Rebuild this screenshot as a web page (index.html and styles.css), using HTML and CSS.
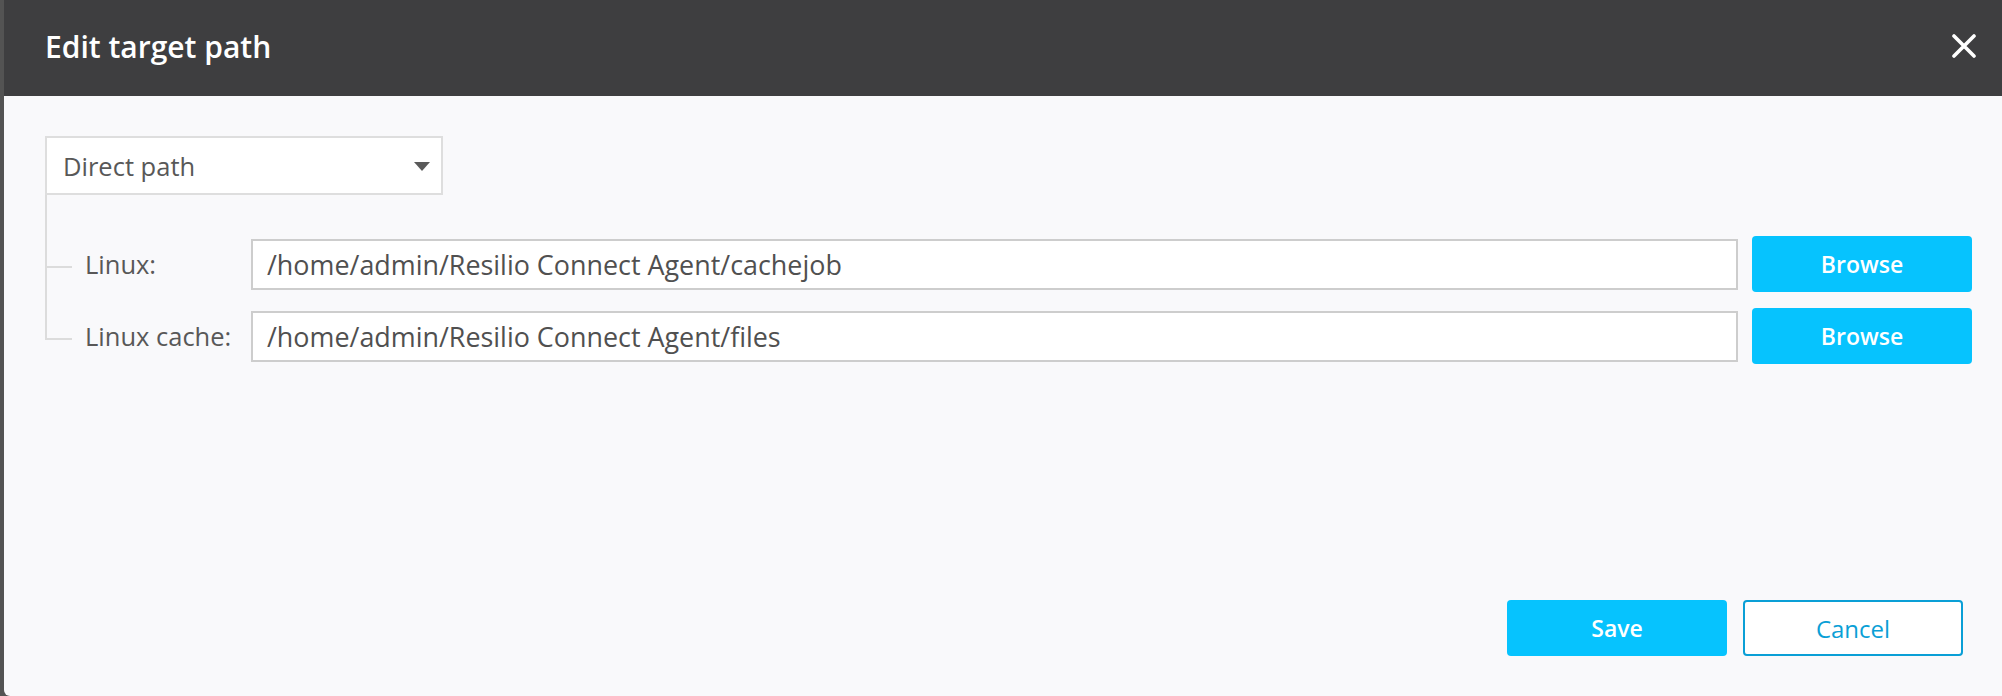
FILE: index.html
```html
<!DOCTYPE html>
<html lang="en">
<head>
<meta charset="utf-8">
<title>Edit target path</title>
<link rel="stylesheet" href="styles.css">
</head>
<body>
<div class="backdrop">
  <div class="modal">
    <div class="modal-header">
      <h1 class="modal-title">Edit target path</h1>
      <button class="close-btn" aria-label="Close">
        <svg width="24" height="24" viewBox="0 0 24 24"><path d="M2 2 L22 22 M22 2 L2 22" stroke="#fff" stroke-width="3.6" stroke-linecap="round" fill="none"/></svg>
      </button>
    </div>
    <div class="modal-body">
      <div class="select">
        <span class="select-value">Direct path</span>
        <svg class="caret" width="16" height="9" viewBox="0 0 16 9"><path d="M0 0 H16 L8 9 Z" fill="#5a5a5a"/></svg>
      </div>
      <div class="tree">
        <div class="row">
          <label class="row-label">Linux:</label>
          <div class="path-input">/home/admin/Resilio Connect Agent/cachejob</div>
          <button class="btn btn-primary btn-browse">Browse</button>
        </div>
        <div class="row">
          <label class="row-label">Linux cache:</label>
          <div class="path-input">/home/admin/Resilio Connect Agent/files</div>
          <button class="btn btn-primary btn-browse">Browse</button>
        </div>
      </div>
    </div>
    <div class="modal-footer">
      <button class="btn btn-primary">Save</button>
      <button class="btn btn-outline">Cancel</button>
    </div>
  </div>
</div>
</body>
</html>
```

FILE: styles.css
```css
* { box-sizing: border-box; }

html, body {
  margin: 0;
  padding: 0;
  width: 2002px;
  height: 696px;
  overflow: hidden;
}

body {
  background: #535353;
  font-family: "Open Sans", "Noto Sans", sans-serif;
}

.backdrop {
  display: flex;
  height: 696px;
  padding-left: 4px;
}

.modal {
  flex: 1;
  display: flex;
  flex-direction: column;
  background: #f9f9fb;
  border-bottom-left-radius: 6px;
  overflow: hidden;
}

.modal-header {
  height: 96px;
  flex: none;
  background: #3e3e40;
  display: flex;
  align-items: center;
  justify-content: space-between;
  padding: 0 26px 0 41px;
}

.modal-title {
  margin: 0;
  font-size: 30px;
  font-weight: 600;
  color: #ffffff;
  line-height: 1;
  padding-bottom: 2px;
}

.close-btn {
  background: none;
  border: 0;
  padding: 0;
  width: 24px;
  height: 24px;
  margin-bottom: 4px;
  display: flex;
}

.modal-body {
  padding: 40px 30px 0 41px;
}

.select {
  width: 398px;
  height: 59px;
  border: 2px solid #dedede;
  background: #ffffff;
  display: flex;
  align-items: center;
  justify-content: space-between;
  padding: 0 11px 0 16px;
}

.select-value {
  font-size: 25.5px;
  color: #585858;
}

.caret { display: block; margin-top: 1px; }

.tree {
  display: flex;
  flex-direction: column;
  gap: 16px;
  padding-top: 41px;
}

.row {
  position: relative;
  display: flex;
  align-items: center;
  height: 56px;
  padding-left: 40px;
}

.row::before {
  content: "";
  position: absolute;
  left: 0;
  top: -44px;
  width: 25px;
  height: 74px;
  border-left: 2px solid #dcdcdc;
  border-bottom: 2px solid #dcdcdc;
}

.row:first-child::before {
  top: -41px;
  height: 71px;
}

.row-label {
  width: 166px;
  flex: none;
  font-size: 25.5px;
  color: #585858;
}

.path-input {
  flex: 1;
  height: 51px;
  border: 2px solid #cdcdcd;
  background: #ffffff;
  display: flex;
  align-items: center;
  padding: 0 10px 0 14px;
  font-size: 26.9px;
  color: #505050;
  white-space: nowrap;
}

.btn {
  font-family: "Open Sans", "Noto Sans", sans-serif;
  font-size: 23px;
  font-weight: 600;
  width: 220px;
  height: 56px;
  border-radius: 4px;
  cursor: pointer;
}

.btn-primary {
  background: #06c3fe;
  color: #ffffff;
  border: 0;
}

.btn-browse {
  margin-left: 14px;
  flex: none;
}

.btn-outline {
  background: #ffffff;
  color: #0a9fd6;
  border: 2px solid #0a9fd6;
  font-size: 24px;
  font-weight: 400;
}

.modal-footer {
  margin-top: auto;
  display: flex;
  justify-content: flex-end;
  gap: 16px;
  padding: 0 39px 40px 0;
}
```
